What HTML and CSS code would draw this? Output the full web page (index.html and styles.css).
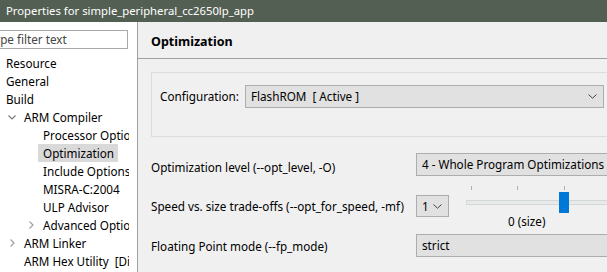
FILE: index.html
```html
<!DOCTYPE html>
<html lang="en">

<head>
    <meta charset="UTF-8" />
    <meta name="viewport" content="width=device-width, initial-scale=1.0" />
    <title>Properties for simple_peripheral_cc2650lp_app</title>
    <link rel="stylesheet" href="styles.css">
</head>

<body>
    <div class="titlebar">Properties for simple_peripheral_cc2650lp_app</div>

    <div class="dialog">
        <aside class="nav">
            <div class="filter">type filter text</div>
            <ul class="tree">
                <li class="lvl0">Resource</li>
                <li class="lvl0">General</li>
                <li class="lvl0">Build</li>
                <li class="lvl1"><span class="twisty open"><svg width="8" height="5" viewBox="0 0 8 5"><path d="M0.5 0.5 L4 4 L7.5 0.5" fill="none" stroke="#7a7a7a" stroke-width="1.2"/></svg></span>ARM Compiler</li>
                <li class="lvl2">Processor Options</li>
                <li class="lvl2"><span class="selected">Optimization</span></li>
                <li class="lvl2">Include Options</li>
                <li class="lvl2">MISRA-C:2004</li>
                <li class="lvl2">ULP Advisor</li>
                <li class="lvl2"><span class="twisty"><svg width="5" height="8" viewBox="0 0 5 8"><path d="M0.5 0.5 L4 4 L0.5 7.5" fill="none" stroke="#a0a0a0" stroke-width="1.2"/></svg></span>Advanced Options</li>
                <li class="lvl1"><span class="twisty"><svg width="5" height="8" viewBox="0 0 5 8"><path d="M0.5 0.5 L4 4 L0.5 7.5" fill="none" stroke="#a0a0a0" stroke-width="1.2"/></svg></span>ARM Linker</li>
                <li class="lvl1">ARM Hex Utility&nbsp; [Disabled]</li>
            </ul>
        </aside>

        <main class="page">
            <h2 class="page-title">Optimization</h2>

            <div class="page-body">
                <div class="config-box">
                    <label>Configuration:</label>
                    <div class="combo wide">
                        <span>FlashROM&nbsp; [ Active ]</span>
                        <svg class="chev" width="9" height="5" viewBox="0 0 9 5"><path d="M0.5 0.5 L4.5 4.2 L8.5 0.5" fill="none" stroke="#444" stroke-width="1"/></svg>
                    </div>
                </div>

                <div class="options">
                    <div class="row r1">
                        <label>Optimization level (--opt_level, -O)</label>
                        <div class="combo fill"><span>4 - Whole Program Optimizations</span></div>
                    </div>
                    <div class="row r2">
                        <label>Speed vs. size trade-offs (--opt_for_speed, -mf)</label>
                        <div class="speed">
                            <div class="combo small">
                                <span>1</span>
                                <svg class="chev" width="9" height="5" viewBox="0 0 9 5"><path d="M0.5 0.5 L4.5 4.2 L8.5 0.5" fill="none" stroke="#444" stroke-width="1"/></svg>
                            </div>
                            <div class="slider">
                                <div class="ticks"><i></i><i></i><i></i><i></i></div>
                                <div class="track"></div>
                                <div class="thumb"></div>
                                <div class="slider-label">0 (size)</div>
                            </div>
                        </div>
                    </div>
                    <div class="row r3">
                        <label>Floating Point mode (--fp_mode)</label>
                        <div class="combo fill"><span>strict</span></div>
                    </div>
                </div>
            </div>
        </main>
    </div>
</body>

</html>
```

FILE: styles.css
```css
body {
    margin: 0;
    width: 607px;
    height: 272px;
    overflow: hidden;
    background: #f0f0f0;
    color: #000;
    font-family: "Noto Sans", sans-serif;
    font-size: 11.7px;
}

.titlebar {
    height: 22px;
    line-height: 21px;
    padding-left: 6px;
    background: #535f52;
    color: #fff;
    font-size: 11.3px;
    white-space: nowrap;
}

.dialog {
    display: flex;
    height: 250px;
}

.nav {
    width: 137px;
    flex: none;
    background: #fff;
    border-right: 1px solid #a0a0a0;
    overflow: hidden;
}

.filter {
    margin: 8px 0 0 -16px;
    width: 137px;
    height: 17px;
    line-height: 17px;
    padding-left: 5px;
    border: 1px solid #a9a9a9;
    color: #444;
    white-space: nowrap;
}

.tree {
    list-style: none;
    margin: 5px 0 0;
    padding: 0;
    width: 129px;
    overflow: hidden;
}

.tree li {
    position: relative;
    height: 18px;
    line-height: 18px;
    white-space: nowrap;
}

.lvl0 { padding-left: 6px; }
.lvl1 { padding-left: 24px; }
.lvl2 { padding-left: 43px; }

.twisty {
    position: absolute;
    top: 0;
    height: 18px;
    display: flex;
    align-items: center;
}

.lvl1 .twisty { left: 8px; }
.lvl1 .twisty:not(.open) { left: 10px; }
.lvl2 .twisty { left: 29px; }

.selected {
    display: inline-block;
    margin-left: -5px;
    padding: 0 4px 0 5px;
    background: #d9d9d9;
}

.page {
    flex: 1;
    min-width: 0;
}

.page-title {
    margin: 0;
    height: 36px;
    line-height: 40px;
    padding-left: 13px;
    font-size: 12.5px;
    font-weight: bold;
    border-bottom: 1px solid #a0a0a0;
}

.page-body {
    padding: 13px 0 0 13px;
}

.config-box {
    display: flex;
    align-items: flex-start;
    gap: 6px;
    height: 51px;
    margin-right: -20px;
    padding: 12px 0 0 8px;
    border: 1px solid #dcdcdc;
    border-right: none;
}

.config-box label {
    line-height: 23px;
}

.combo {
    position: relative;
    box-sizing: border-box;
    height: 23px;
    line-height: 21px;
    padding-left: 5px;
    background: #e1e1e1;
    border: 1px solid #adadad;
    white-space: nowrap;
}

.combo .chev {
    position: absolute;
    right: 6px;
    top: 8px;
}

.combo.wide {
    width: 359px;
}

.combo.fill {
    width: 200px;
}

.combo.small {
    width: 33px;
    height: 22px;
    line-height: 20px;
}

.options {
    display: grid;
    grid-template-columns: 265px 1fr;
    margin-top: 16px;
}

.row {
    display: contents;
}

.row label {
    align-self: center;
}

.r1 .combo { margin-bottom: 4px; }

.speed {
    display: flex;
    align-items: center;
    gap: 17px;
    height: 52px;
}

.slider {
    position: relative;
    flex: 1;
    align-self: stretch;
}

.ticks i {
    position: absolute;
    top: 6px;
    width: 1px;
    height: 4px;
    background: #b0b0b0;
}

.ticks i:nth-child(1) { left: 5px; }
.ticks i:nth-child(2) { left: 51px; }
.ticks i:nth-child(3) { left: 98px; }
.ticks i:nth-child(4) { left: 145px; }

.track {
    position: absolute;
    top: 20px;
    left: 0;
    right: 0;
    height: 3px;
    background: #e7eaea;
    border: 1px solid #d6d6d6;
}

.thumb {
    position: absolute;
    top: 12px;
    left: 93px;
    width: 10px;
    height: 21px;
    background: #0078d7;
}

.slider-label {
    position: absolute;
    top: 33px;
    left: 42px;
    line-height: 16px;
}

.r3 > * { margin-top: 2px; }
```
